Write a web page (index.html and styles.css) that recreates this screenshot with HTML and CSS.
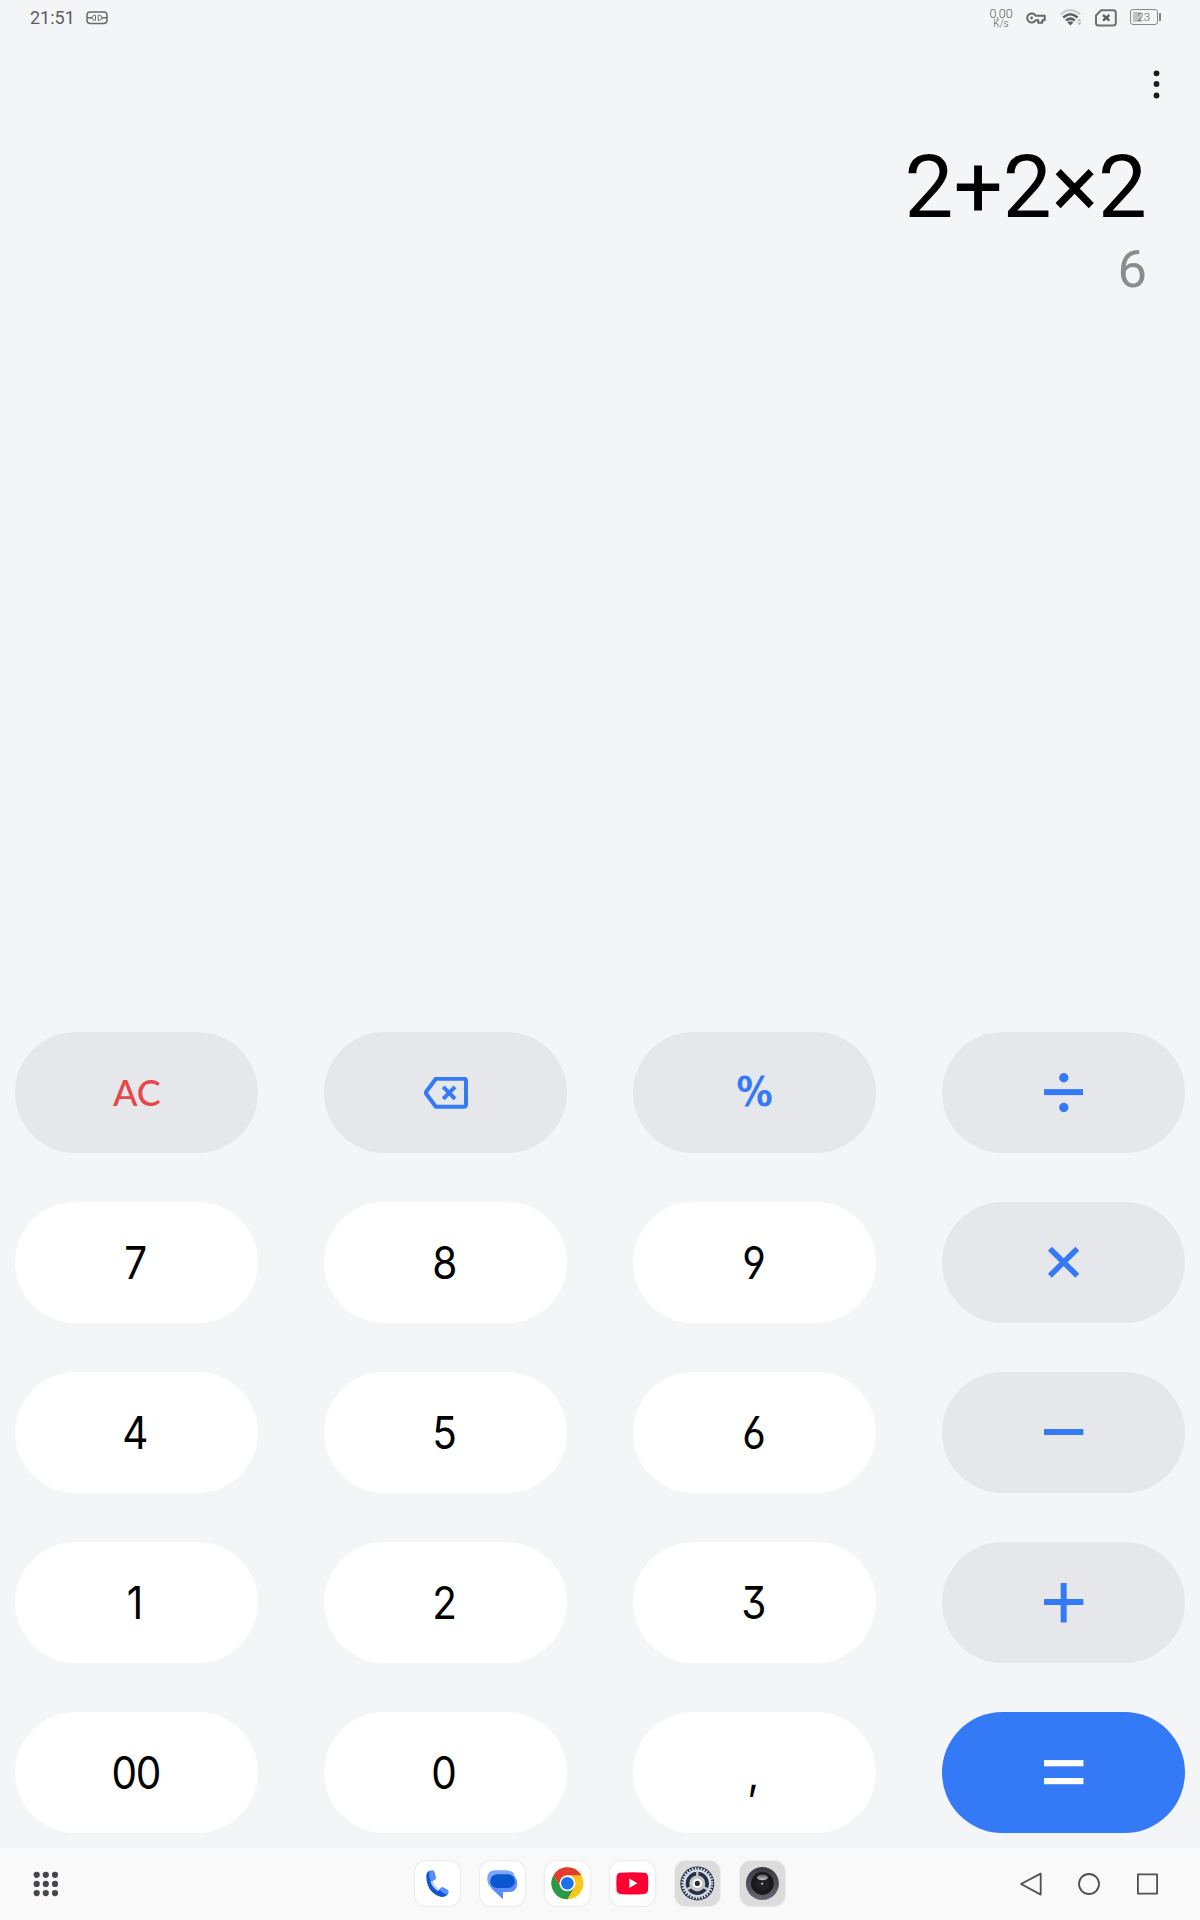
FILE: index.html
```html
<!DOCTYPE html>
<html lang="en">
  <head>
    <meta charset="UTF-8" />
    <meta name="viewport" content="width=device-width, initial-scale=1.0" />
    <title>Calculator</title>
    <link rel="stylesheet" href="styles.css">
  </head>
  <body>
    <header class="status-bar">
      <span class="clock">21:51</span>
      <svg class="status-capsule" width="22" height="14" viewBox="0 0 22 14" fill="none" stroke="#6a6b6d">
        <rect x="1" y="1" width="20" height="11.5" rx="3.2" stroke-width="1.5" />
        <path d="M1 6.8H6M16 6.8H21" stroke-width="1.4" />
        <path d="M9.5 4.3H8.3Q6 4.7 6 6.8Q6 8.9 8.3 9.3H9.5ZM12.2 4.3H13.5Q15.9 4.7 15.9 6.8Q15.9 8.9 13.5 9.3H12.2Z" />
      </svg>
      <div class="status-right">
        <div class="net-speed">
          <span class="net-value">0,00</span>
          <span class="net-unit">K/s</span>
        </div>
        <svg class="status-key" width="20" height="12" viewBox="0 0 20 12" fill="none" stroke="#67686a" stroke-width="2">
          <path d="M9.6 3.7A4.5 4.5 0 1 0 9.6 8.3H12.2V10.8H16.3V8.3H18.7V3.7Z" stroke-linejoin="round" />
          <circle cx="5.6" cy="6" r="1.4" fill="#67686a" stroke="none" />
        </svg>
        <svg class="status-wifi" width="22" height="18" viewBox="0 0 22 18" fill="none">
          <path d="M.6 5.4Q10.4-3 20.2 5.4" stroke="#c9cacc" stroke-width="2.2" />
          <path d="M3.2 8.5Q10.4 1.9 17.6 8.5M6 11.6Q10.4 7.6 14.8 11.6" stroke="#5f6062" stroke-width="2.5" />
          <path d="M7.4 13.6Q10.4 11 13.4 13.6L10.4 16.6Z" fill="#5f6062" />
          <path d="M17 12.3L19.3 9.4L21.6 12.3ZM17 13.6H21.6L19.3 16.4Z" fill="#bfc0c2" />
        </svg>
        <svg class="status-sim" width="22" height="18" viewBox="0 0 22 18" fill="none" stroke="#6f7072">
          <path d="M6.2 1.2H18.4Q20.8 1.2 20.8 3.6V14Q20.8 16.4 18.4 16.4H3.4Q1 16.4 1 14V6.5Z" stroke-width="2" stroke-linejoin="round" />
          <path d="M8 6L14.4 11.6M14.4 6L8 11.6" stroke="#5f6062" stroke-width="2.4" />
        </svg>
        <div class="battery">
          <span class="battery-body"><span class="battery-text">23</span></span>
          <span class="battery-tip"></span>
        </div>
      </div>
    </header>

    <div class="toolbar">
      <svg class="menu-dots" width="8" height="30" viewBox="0 0 8 30" fill="#1b1b1d">
        <circle cx="4.5" cy="4.3" r="2.9" />
        <circle cx="4.5" cy="15" r="2.9" />
        <circle cx="4.5" cy="26.5" r="2.9" />
      </svg>
    </div>

    <section class="display">
      <p class="expression">2+2×2</p>
      <p class="result">6</p>
    </section>

    <main class="keypad">
      <button class="key key-fn key-clear"><span>AC</span></button>
      <button class="key key-fn" aria-label="Backspace">
        <svg width="44" height="32" viewBox="0 0.2 44 32" fill="none" stroke="currentColor" stroke-width="4">
          <path d="M11.8 2H39.8Q42 2 42 4.2V27.8Q42 30 39.8 30H11.8L2.2 17Q1.6 16 2.2 15Z" stroke-linejoin="round" />
          <path d="M19.2 10L31 22M31 10L19.2 22" />
        </svg>
      </button>
      <button class="key key-fn key-percent"><span>%</span></button>
      <button class="key key-fn" aria-label="Divide">
        <svg width="40" height="40" viewBox="0.5 0.5 40 40" fill="currentColor">
          <rect x=".5" y="16.6" width="39" height="6" />
          <circle cx="20.3" cy="5.2" r="4.7" />
          <circle cx="20.3" cy="35" r="4.7" />
        </svg>
      </button>

      <button class="key"><span>7</span></button>
      <button class="key"><span>8</span></button>
      <button class="key"><span>9</span></button>
      <button class="key key-fn" aria-label="Multiply">
        <svg width="40" height="40" viewBox="0.5 0.5 40 40" stroke="currentColor" stroke-width="5.6">
          <path d="M6.4 6.2L33.8 33.2M33.8 6.2L6.4 33.2" />
        </svg>
      </button>

      <button class="key"><span>4</span></button>
      <button class="key"><span>5</span></button>
      <button class="key"><span>6</span></button>
      <button class="key key-fn" aria-label="Minus">
        <svg width="40" height="40" viewBox="0.5 0.5 40 40" fill="currentColor">
          <rect x=".5" y="16.6" width="39.4" height="6" rx=".6" />
        </svg>
      </button>

      <button class="key"><span>1</span></button>
      <button class="key"><span>2</span></button>
      <button class="key"><span>3</span></button>
      <button class="key key-fn" aria-label="Plus">
        <svg width="40" height="40" viewBox="0.5 0.5 40 40" fill="currentColor">
          <rect x=".5" y="16.6" width="39.4" height="6" rx=".6" />
          <rect x="17.2" y=".5" width="6" height="39.4" rx=".6" />
        </svg>
      </button>

      <button class="key key-double"><span>00</span></button>
      <button class="key"><span>0</span></button>
      <button class="key key-comma"><span>,</span></button>
      <button class="key key-equals" aria-label="Equals">
        <svg width="40" height="40" viewBox="0.5 0.5 40 40" fill="currentColor">
          <rect x=".5" y="7.6" width="39.4" height="6.2" />
          <rect x=".5" y="25.5" width="39.4" height="6.2" />
        </svg>
      </button>
    </main>

    <nav class="taskbar">
      <svg class="drawer" width="26" height="26" viewBox="0 0 26 26" fill="#4a444c">
        <circle cx="3.7" cy="3.8" r="3.1" /><circle cx="12.8" cy="3.8" r="3.1" /><circle cx="22" cy="3.8" r="3.1" />
        <circle cx="3.7" cy="12.9" r="3.1" /><circle cx="12.8" cy="12.9" r="3.1" /><circle cx="22" cy="12.9" r="3.1" />
        <circle cx="3.7" cy="22.1" r="3.1" /><circle cx="12.8" cy="22.1" r="3.1" /><circle cx="22" cy="22.1" r="3.1" />
      </svg>

      <div class="dock">
        <!-- Phone -->
        <svg class="app" viewBox="0 0 45 45">
          <path d="M11.2 14.5Q12 10.5 15 9.6L17.5 18.5L15.6 20.4Q18 26.6 23.6 29.4L26 28L32.8 33.6Q29.5 37.2 24 35.3Q11.5 30.5 11.2 14.5Z" fill="#0b57d0" />
          <path d="M15.4 20.6L17.6 19.4Q19.2 25 24.4 28.2L23 30.2Q17.5 27 15.4 20.6Z" fill="#b9cffb" />
          <path d="M14.6 10Q18.6 8 19.6 11L21 16.6Q21.2 18.4 17 20.6Q13 17 14.6 10Z" fill="#5b8dfa" />
          <path d="M24 28.6Q26.2 25.6 28.2 26.2L32.6 28.7Q34.8 30.6 32.4 34Q28 32.8 24 28.6Z" fill="#5b8dfa" />
        </svg>
        <!-- Messages -->
        <svg class="app" viewBox="0 0 45 45">
          <path d="M15.5 9.3H26.5Q34.2 9.3 35 16.5L33 22L10.8 26Q7.3 23.5 7.3 17.5Q7.3 9.3 15.5 9.3Z" fill="#7da6fb" />
          <path d="M10.5 24L34 15.2Q37.2 17.6 37.2 22Q37.2 31 28.8 31H23V38.2L12.8 28.8Q10 26.4 10.5 24Z" fill="#5b8dfa" />
          <rect x="10.2" y="13.3" width="24.6" height="13.8" rx="6.9" fill="#0b57d0" />
        </svg>
        <!-- Chrome -->
        <svg class="app" viewBox="0 0 45 45">
          <circle cx="22.4" cy="22.3" r="16" fill="#ffc41c" />
          <path d="M8.5 14.3A16 16 0 0 1 36.3 14.3H22.4L15.5 26.3Z" fill="#e33b2e" />
          <path d="M8.5 14.3A16 16 0 0 0 22.4 38.3L29.3 26.3H15.5Z" fill="#2a9a48" />
          <circle cx="22.4" cy="22.3" r="8" fill="#fff" />
          <circle cx="22.4" cy="22.3" r="6.3" fill="#1a73e8" />
        </svg>
        <!-- YouTube -->
        <svg class="app" viewBox="0 0 45 45">
          <path d="M10.3 11.7Q22.3 10.7 34.3 11.7Q37.6 12 38 15.3Q38.6 22.3 38 29.3Q37.6 32.6 34.3 32.9Q22.3 33.9 10.3 32.9Q7 32.6 6.6 29.3Q6 22.3 6.6 15.3Q7 12 10.3 11.7Z" fill="#ff0033" />
          <path d="M19.3 17.5L27.4 22.3L19.3 27.1Z" fill="#fff" />
        </svg>
        <!-- Settings -->
        <svg class="app app-open" viewBox="0 0 45 45" fill="none">
          <circle cx="22.3" cy="22.4" r="17" fill="#253041" />
          <circle cx="22.3" cy="22.4" r="12.8" stroke="#d5dceb" stroke-width="2.4" />
          <circle cx="22.3" cy="22.4" r="14.8" stroke="#d5dceb" stroke-width="2.6" stroke-dasharray="1.5 1.406" />
          <circle cx="22.3" cy="22.4" r="6" stroke="#c5c8c8" stroke-width="4" />
          <path d="M22.3 10V16M11.6 28.6L17 25.5M33 28.6L27.6 25.5" stroke="#c5c8c8" stroke-width="2.4" />
          <circle cx="22.3" cy="22.4" r="4.7" fill="#fff" />
          <circle cx="22.3" cy="22.4" r="2.6" fill="#253041" />
        </svg>
        <!-- Camera -->
        <svg class="app app-open" viewBox="0 0 45 45">
          <defs>
            <linearGradient id="lens-ring" x1="0" y1="0" x2="0" y2="1">
              <stop offset="0" stop-color="#3a3941" />
              <stop offset="1" stop-color="#676572" />
            </linearGradient>
            <linearGradient id="lens-glare" x1="0" y1="0" x2="0" y2="1">
              <stop offset="0" stop-color="#555" />
              <stop offset="1" stop-color="#c8c8c8" />
            </linearGradient>
          </defs>
          <circle cx="22.4" cy="22.5" r="16.5" fill="url(#lens-ring)" />
          <circle cx="22.4" cy="22.5" r="11.4" fill="#19191b" />
          <circle cx="22.4" cy="22.5" r="7" fill="#222225" />
          <path d="M16.8 17Q17.2 13.4 22.4 13.4Q27.6 13.4 28 17Q25.8 19.2 22.4 19.2Q19 19.2 16.8 17Z" fill="url(#lens-glare)" />
          <circle cx="22.2" cy="22.6" r=".9" fill="#fff" />
        </svg>
      </div>

      <svg class="nav-buttons" width="140" height="26" viewBox="0 0 140 26" fill="none" stroke="#505052" stroke-width="1.8" stroke-linejoin="round">
        <path d="M3 13L22.7 2.6V23.6Z" />
        <circle cx="71" cy="13" r="10" />
        <rect x="119.9" y="3.4" width="19.2" height="19.2" />
      </svg>
    </nav>
  </body>
</html>
```
FILE: styles.css
```css
* {
  margin: 0;
  padding: 0;
  box-sizing: border-box;
}

body {
  background-color: #f4f5f7;
  font-family: Roboto, sans-serif;
  height: 100vh;
  display: flex;
  flex-direction: column;
  overflow: hidden;
}

svg {
  display: block;
  flex-shrink: 0;
}

/* Status bar */
.status-bar {
  height: 36px;
  padding: 0 39.5px 0 30px;
  display: flex;
  align-items: center;
  color: #5c5d5f;
}

.clock {
  font-size: 18px;
  line-height: 36px;
}

.status-capsule {
  margin-left: 11px;
}

.status-right {
  margin-left: auto;
  display: flex;
  align-items: center;
}

.net-speed {
  display: flex;
  flex-direction: column;
  align-items: center;
  width: 24px;
  padding-top: 1px;
  font-weight: 300;
}

.net-value {
  font-size: 12.5px;
  line-height: 11px;
}

.net-unit {
  font-size: 10px;
  line-height: 10px;
}

.status-key {
  margin-left: 13px;
}

.status-wifi {
  margin: -1px 0 0 14px;
}

.status-sim {
  margin: -1px 0 0 12.5px;
}

.battery {
  display: flex;
  align-items: center;
  gap: 1px;
  margin: -2px 0 0 13px;
}

.battery-body {
  width: 28.5px;
  height: 16px;
  border: 1.5px solid #858688;
  border-radius: 3px;
  background: linear-gradient(90deg, #c2c3c5 8px, transparent 8px) content-box;
  padding: 2px;
}

.battery-text {
  display: block;
  font-size: 11.5px;
  font-weight: 300;
  line-height: 10px;
  text-align: center;
}

.battery-tip {
  width: 1.5px;
  height: 8px;
  background-color: #858688;
}

/* Display */
.toolbar {
  height: 68px;
  padding: 33px 40px 0 0;
  display: flex;
  justify-content: flex-end;
}

.display {
  flex: 1;
  padding: 32px 53px 0 0;
  text-align: right;
}

.expression {
  font-size: 87px;
  line-height: 102px;
  color: #000;
}

.result {
  font-size: 52.5px;
  line-height: 62px;
  color: #8c8c8d;
}

/* Keypad */
.keypad {
  display: grid;
  grid-template-columns: repeat(4, 243px);
  grid-auto-rows: 121px;
  gap: 49px 66px;
  padding: 0 15px 15px;
}

.key {
  display: flex;
  align-items: center;
  justify-content: center;
  padding: 2px 2px 0 0;
  border: none;
  border-radius: 61px;
  background-color: #fff;
  color: #000;
  font-family: Inter, sans-serif;
  font-feature-settings: "cv03", "cv04", "cv09";
  font-size: 44.5px;
  line-height: 1;
  cursor: pointer;
}

.key span {
  display: inline-block;
  transform: scaleX(0.91);
}

.key-fn,
.key-equals {
  padding: 0;
}

.key-fn {
  background-color: #e6e7eb;
  color: #347af6;
}

.key-clear {
  padding: 0 0 2px;
  color: #e54848;
  font-family: Lato, sans-serif;
  font-weight: 500;
  font-size: 37.5px;
}

.key-clear span {
  transform: scaleX(0.96);
}

.key-percent {
  font-family: "DejaVu Sans", sans-serif;
  font-weight: bold;
  font-size: 41px;
}

.key-percent span {
  transform: scaleX(0.88);
}

.key-double {
  letter-spacing: -1.2px;
}

.key-equals {
  background-color: #347af6;
  color: #fff;
}

/* Taskbar */
.taskbar {
  height: 72px;
  flex-shrink: 0;
  background-color: #f9f9f9;
  padding: 0 42.5px 1px 33px;
  display: flex;
  justify-content: space-between;
  align-items: center;
}

.drawer {
  margin-right: 123.5px;
}

.dock {
  display: flex;
  gap: 20px;
}

.app {
  width: 45px;
  height: 45px;
  border-radius: 11px;
  background-color: #fff;
  box-shadow: 0 0 2px rgba(0, 0, 0, 0.18);
}

.app-open {
  background-color: #dcdcdc;
}
```
